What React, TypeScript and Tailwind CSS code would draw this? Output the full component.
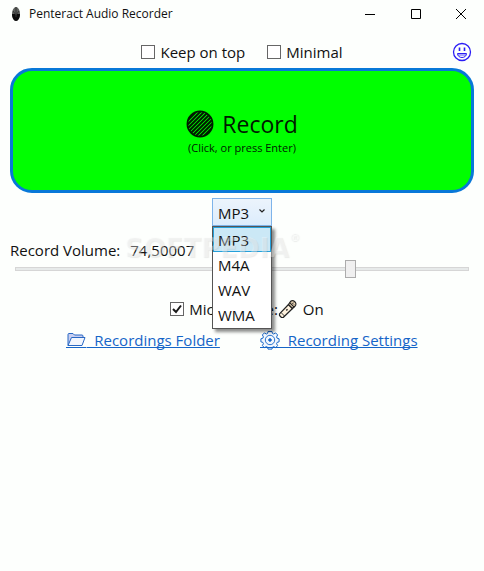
import React, { useState } from "react";

const formats = ["MP3", "M4A", "WAV", "WMA"];

function AppIcon() {
  return (
    <svg width="10" height="14" viewBox="0 0 10 14" aria-hidden="true">
      <path d="M5 0C3 0 1 3 1 7s2 7 4 7 4-3 4-7-2-7-4-7z" fill="#5c5f5c" />
      <path d="M1 7h8c0 4-2 7-4 7S1 11 1 7z" fill="#0c0c0c" />
      <path d="M5 0v10M2 4l3 4 3-4" stroke="#333" strokeWidth="1" fill="none" />
    </svg>
  );
}

function SmileyIcon() {
  return (
    <svg width="20" height="20" viewBox="0 0 20 20" fill="none" stroke="#2a1cf5" aria-hidden="true">
      <circle cx="10" cy="10" r="8.5" strokeWidth="1.3" />
      <path d="M7.500 5.500v3.500M12.500 5.500v3.500" strokeWidth="1.600" />
      <path d="M5.500 11.500h9c0 2.500-2 4-4.500 4s-4.500-1.500-4.500-4z" strokeWidth="1" />
      <path d="M6 13h8" strokeWidth=".8" />
    </svg>
  );
}

function RecordIcon() {
  return (
    <svg width="28" height="28" viewBox="0 0 28 28" stroke="#001a00" fill="none" aria-hidden="true">
      <defs>
        <clipPath id="disc">
          <circle cx="14" cy="14" r="12.500" />
        </clipPath>
      </defs>
      <path
        clipPath="url(#disc)"
        strokeWidth="2"
        d="M-2 10L10 -2M-2 14L14 -2M-2 18L18 -2M-2 22L22 -2M-2 26L26 -2M-2 30L30 -2M2 30L30 2M6 30L30 6M10 30L30 10M14 30L30 14M18 30L30 18"
      />
      <circle cx="14" cy="14" r="12.600" strokeWidth="1.700" />
    </svg>
  );
}

function MicIcon() {
  return (
    <svg
      width="20"
      height="20"
      viewBox="0 0 20 20"
      fill="none"
      stroke="#222"
      strokeLinejoin="round"
      aria-hidden="true"
    >
      <path d="M10.500 5.500L1.500 14.800v1.700l2 2h1.700L14.500 9.500z" fill="#fdf1dc" strokeWidth="1.200" />
      <path d="M10.500 5.500l2-3c1.300-1.200 3-1 4.300.2s1.500 3 .3 4.300l-2.600 2.500z" fill="#f4dfbd" strokeWidth="1.200" />
      <path d="M11.700 3.600l4.700 4.700" strokeWidth="1.200" />
      <path d="M14 3.500l2.500 2.500M15.800 3.300l-2 2" strokeWidth=".6" />
      <path d="M8.300 11.500l1.200-1.200" strokeWidth="1.400" />
      <path d="M3 13.500l3.500 3.500" strokeWidth=".9" />
    </svg>
  );
}

// The last path in each link icon carries the link's underline on below it.
function FolderIcon() {
  return (
    <svg
      width="20"
      height="16"
      viewBox="0 0 20 16"
      stroke="#2868c4"
      fill="none"
      strokeLinejoin="round"
      className="inline align-[-2px]"
      aria-hidden="true"
    >
      <path d="M2 13.500V2.500c0-.6.400-1 1-1h4l1.500 1.500H16c.6 0 1 .4 1 1v1.500" fill="#c9cff0" />
      <path d="M2 13.500L5.500 5.500H19L16 13.500z" fill="#f2f6fd" />
      <path d="M0 15.500h20" stroke="#1565c8" />
    </svg>
  );
}

function GearIcon() {
  return (
    <svg
      width="20"
      height="20"
      viewBox="0 0 20 20"
      stroke="#1565c8"
      fill="none"
      className="inline align-[-4px]"
      aria-hidden="true"
    >
      <path
        fill="#f2f7fd"
        strokeLinejoin="round"
        d="M8 1.500h4l.5 2 1.200.5 1.900-1.100 2 2-1 2 .5 1.300 2 .6v3l-2 .6-.5 1.300 1 1.900-2 2.100-1.900-1.100-1.200.5-.5 2H8l-.5-2-1.200-.5-1.900 1.100-2-2.100 1-1.900-.5-1.300-2-.6v-3l2-.6.5-1.300-1-2 2-2 1.900 1.100 1.200-.5z"
      />
      <circle cx="10" cy="10" r="4.700" strokeWidth=".9" />
      <circle cx="10" cy="10" r="1.300" fill="#1565c8" />
      <path d="M0 17.500h20" />
    </svg>
  );
}

interface CheckProps {
  label: string;
  defaultChecked?: boolean;
}

function Check({ label, defaultChecked }: CheckProps) {
  return (
    <label className="flex items-center gap-[5px] whitespace-nowrap">
      <span className="grid">
        <input
          type="checkbox"
          defaultChecked={defaultChecked}
          className="peer col-start-1 row-start-1 size-3.5 appearance-none border border-[#666] bg-white"
        />
        <svg
          viewBox="0 0 14 14"
          className="pointer-events-none invisible col-start-1 row-start-1 size-3.5 peer-checked:visible"
          aria-hidden="true"
        >
          <path d="M3 7l3 3 5-6.500" stroke="#1a1a1a" strokeWidth="2" fill="none" />
        </svg>
      </span>
      {label}
    </label>
  );
}

export default function App() {
  const [format, setFormat] = useState("MP3");
  const [volume, setVolume] = useState(74.50007);

  return (
    <div className="min-h-screen bg-[#fdfffd] font-['Open_Sans','Noto_Sans',sans-serif] text-[15px] leading-5 text-[#111]">
      <header className="flex h-7 items-center justify-between pl-[11px]">
        <div className="flex items-center gap-2 text-xs">
          <AppIcon />
          <h1>Penteract Audio Recorder</h1>
        </div>
        <div className="flex text-black">
          <button aria-label="Minimize" className="flex h-7 w-[46px] items-center justify-center">
            <svg width="10" height="10" stroke="currentColor"><path d="M0 5.500h10" /></svg>
          </button>
          <button aria-label="Maximize" className="flex h-7 w-[45px] items-center justify-center">
            <svg width="10" height="10" stroke="currentColor" fill="none"><path d="M.5.5h9v9h-9z" /></svg>
          </button>
          <button aria-label="Close" className="flex h-7 w-[46px] items-center justify-center">
            <svg width="10" height="10" stroke="currentColor"><path d="M0 0l10 10M10 0L0 10" /></svg>
          </button>
        </div>
      </header>

      <main className="px-2.5 pt-3.5">
        <div className="grid grid-cols-[1fr_auto_1fr] items-center">
          <div className="col-start-2 flex gap-[22px]">
            <Check label="Keep on top" />
            <Check label="Minimal" />
          </div>
          <button aria-label="Feedback" className="mr-0.5 justify-self-end">
            <SmileyIcon />
          </button>
        </div>

        <button className="mt-1.5 flex h-[125px] w-full flex-col items-center justify-center rounded-[22px] border-3 border-[#0878d8] bg-[#00ff00] pt-1.5 text-[#001a00]">
          <span className="flex items-center gap-2 text-[23px] leading-7">
            <RecordIcon />
            Record
          </span>
          <span className="text-[11px] leading-5">(Click, or press Enter)</span>
        </button>

        <div className="relative mx-auto mt-[5px] w-15">
          <select
            aria-label="Format"
            value={format}
            onChange={(e) => setFormat(e.target.value)}
            className="block h-7 w-full appearance-none border border-[#7eb4ea] bg-linear-to-b from-[#ecf4fc] to-[#dcecfc] pt-0.5 pl-[5px]"
          >
            {formats.map((f) => (
              <option key={f}>{f}</option>
            ))}
          </select>
          <svg
            width="8"
            height="6"
            viewBox="0 0 8 6"
            className="pointer-events-none absolute top-2.5 right-1.5"
            aria-hidden="true"
          >
            <path d="M1.500 1.500L4 4l2.500-2.500" stroke="#222" strokeWidth="1.200" fill="none" />
          </svg>
          <ul
            role="listbox"
            aria-label="Formats"
            className="absolute top-full left-0 z-10 w-full border border-[#555] bg-white pb-px shadow-[3px_3px_3px_rgba(0,0,0,0.45)]"
          >
            {formats.map((f) => (
              <li
                key={f}
                role="option"
                aria-selected={f === format}
                onClick={() => setFormat(f)}
                className="flex h-[25px] items-center border border-transparent pl-1 aria-selected:border-[#26a0da] aria-selected:bg-[#cbe8f6]"
              >
                {f}
              </li>
            ))}
          </ul>
          <span
            aria-hidden="true"
            className="pointer-events-none absolute top-8 right-[-28px] z-20 flex items-start font-['DejaVu_Sans',sans-serif] text-[26px] leading-9 font-bold text-[#ffffff50] [text-shadow:1px_1px_1px_#70707022]"
          >
            SOFTPEDIA
            <span className="text-[11px] leading-4">®</span>
          </span>
        </div>

        <label htmlFor="volume" className="mt-3.5 flex gap-2.5">
          <span>Record Volume:</span>
          <output>{String(volume).replace(".", ",")}</output>
        </label>
        <div className="px-[5px] pt-px">
          <input
            id="volume"
            type="range"
            min="0"
            max="100"
            step="any"
            value={volume}
            onChange={(e) => setVolume(Number(e.target.value))}
            className="block h-4 w-full appearance-none bg-transparent [&::-webkit-slider-runnable-track]:h-1 [&::-webkit-slider-runnable-track]:border [&::-webkit-slider-runnable-track]:border-[#d6d6d6] [&::-webkit-slider-runnable-track]:bg-[#e7eaea] [&::-webkit-slider-thumb]:-mt-2 [&::-webkit-slider-thumb]:h-[18px] [&::-webkit-slider-thumb]:w-[11px] [&::-webkit-slider-thumb]:appearance-none [&::-webkit-slider-thumb]:border [&::-webkit-slider-thumb]:border-[#acacac] [&::-webkit-slider-thumb]:bg-[#f0f0f0]"
          />
        </div>

        <div className="mt-[22px] flex items-center justify-center pl-2.5">
          <Check label="Microphone:" defaultChecked />
          <span className="flex items-center gap-[5px]">
            <MicIcon />
            On
          </span>
        </div>

        <nav className="mt-[11px] flex justify-center gap-10 text-[#1565c8] [text-decoration-skip-ink:none]">
          <a href="#folder" className="underline">
            <FolderIcon />
            &nbsp;&nbsp;Recordings Folder
          </a>
          <a href="#settings" className="underline">
            <GearIcon />
            &nbsp;&nbsp;Recording Settings
          </a>
        </nav>
      </main>
    </div>
  );
}
